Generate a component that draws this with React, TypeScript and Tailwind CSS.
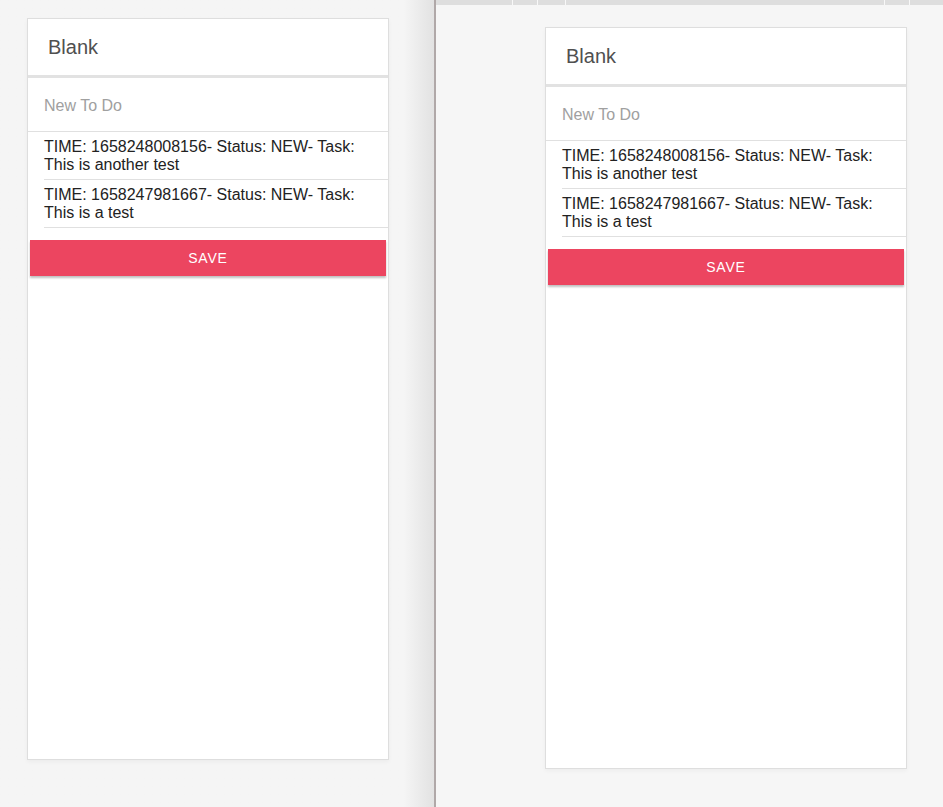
import React from "react";

const items = [
  "TIME: 1658248008156- Status: NEW- Task: This is another test",
  "TIME: 1658247981667- Status: NEW- Task: This is a test",
];

function Card() {
  return (
    <div className="w-[362px] h-[742px] bg-white border border-[#dedede] shadow-[0_2px_4px_rgba(0,0,0,0.04)] flex flex-col">
      <div className="h-[59px] shrink-0 flex items-center pl-[20px] pb-[1px] text-[20px] text-[#505050] border-b-[3px] border-[#e2e2e2]">
        Blank
      </div>
      <div className="h-[54px] shrink-0 flex items-center pl-[16px] pt-[3px] text-[16px] text-[#a0a0a0] border-b border-[#e0e0e0]">
        New To Do
      </div>
      <div className="flex flex-col">
        {items.map((t) => (
          <div key={t} className="ml-[16px] pr-[14px] h-[48px] flex items-center pt-[1px] border-b border-[#e0e0e0] text-[16px] leading-[18px] text-[#222]">
            <span>{t}</span>
          </div>
        ))}
      </div>
      <div className="px-[2px] mt-[12px]">
        <div className="h-[36px] bg-[#ec4560] flex items-center justify-center text-white text-[14px] tracking-[0.8px] shadow-[0_2px_2px_rgba(0,0,0,0.25)]">
          SAVE
        </div>
      </div>
    </div>
  );
}

export default function App() {
  return (
    <div className="w-[943px] h-[807px] flex bg-[#f5f5f5] overflow-hidden" style={{ fontFamily: '"Liberation Sans", Arial, sans-serif' }}>
      <div className="w-[434px] h-full flex bg-gradient-to-r from-[#f5f5f5] from-[93%] to-[#e2e2e2]">
        <div className="pt-[18px] pl-[27px]">
          <Card />
        </div>
      </div>
      <div className="w-[2px] h-full bg-[#b0a8a8]" />
      <div className="flex-1 h-full flex flex-col bg-[#f6f6f6]">
        <div className="h-[5px] bg-[#dedede] flex">
          <div className="w-[77px] border-r border-[#f8f8f8]" />
          <div className="w-[25px] border-r border-[#f8f8f8]" />
          <div className="w-[28px] border-r border-[#f8f8f8]" />
          <div className="w-[319px] border-r border-[#f8f8f8]" />
          <div className="w-[25px] border-r border-[#f8f8f8]" />
          <div className="flex-1" />
        </div>
        <div className="pt-[22px] pl-[109px]">
          <Card />
        </div>
      </div>
    </div>
  );
}
